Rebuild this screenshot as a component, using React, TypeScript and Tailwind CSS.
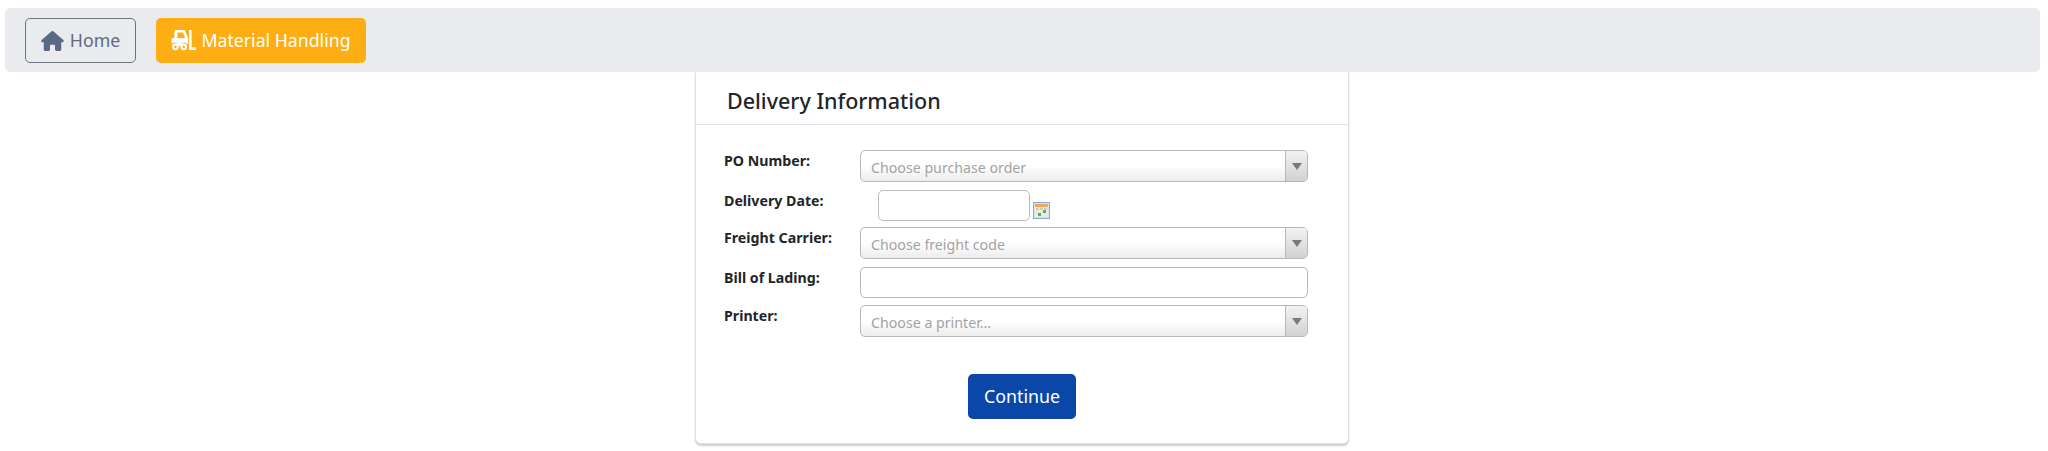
import { FaHouse } from "react-icons/fa6";

function Forklift() {
  return (
    <svg viewBox="0 0 25 21" className="w-[25px] h-[21px] shrink-0" fill="currentColor">
      <path d="M5 0h7.5c.9 0 1.6.5 1.9 1.3L17 8.2c.2.3.2.6.2.9V14.4a4.6 4.6 0 0 0-8 1.8H7.8A4.6 4.6 0 0 0 .6 13.8V9.6C.6 8.7 1.3 8 2.2 8H3.4V1.6C3.4.7 4.1 0 5 0zm1.4 2.6V8h7.8l-2.3-5.4H6.4z" fillRule="evenodd" />
      <path d="M1 16.8a3.4 3.4 0 1 1 6.8 0 3.4 3.4 0 0 1-6.8 0zm2.2 0a1.2 1.2 0 1 0 2.4 0 1.2 1.2 0 0 0-2.4 0z" fillRule="evenodd" />
      <path d="M9.4 16.8a3.4 3.4 0 1 1 6.8 0 3.4 3.4 0 0 1-6.8 0zm2.2 0a1.2 1.2 0 1 0 2.4 0 1.2 1.2 0 0 0-2.4 0z" fillRule="evenodd" />
      <path d="M18 0h2.6v17.2h4.4V20h-5.8c-.7 0-1.2-.5-1.2-1.2V0z" />
    </svg>
  );
}

function CalendarIcon() {
  return (
    <svg viewBox="0 0 17 17" className="w-[17px] h-[17px] mt-[12px] ml-[3px] shrink-0">
      <rect x="0.5" y="0.5" width="16" height="16" fill="#d5e3f4" stroke="#86acd8" />
      <rect x="2" y="2" width="13" height="3" fill="#f7a557" />
      <rect x="2" y="5" width="13" height="10" fill="#efe9dc" />
      <rect x="3" y="6" width="3" height="2" fill="#d8cdb6" />
      <rect x="7" y="6" width="3" height="2" fill="#d8cdb6" />
      <rect x="11" y="6" width="3" height="2" fill="#d8cdb6" />
      <rect x="10" y="8" width="3" height="3" fill="#5fa869" />
      <rect x="5" y="11" width="3" height="3" fill="#5fa869" />
    </svg>
  );
}

function ComboBox({ placeholder }: { placeholder: string }) {
  return (
    <div className="w-[448px] h-[32px] flex border border-[#b8b8b8] rounded-[5px] overflow-hidden bg-gradient-to-b from-white from-50% to-[#ececec]">
      <div className="flex-1 pl-[10px] text-[14.2px] leading-[33px] text-[#a3a3a3]">{placeholder}</div>
      <div className="w-[22px] border-l border-[#b8b8b8] bg-gradient-to-b from-[#f2f2f2] to-[#d2d2d2] flex items-center justify-center">
        <div className="w-0 h-0 border-x-[5px] border-x-transparent border-t-[7px] border-t-[#7a7a7a]"></div>
      </div>
    </div>
  );
}

function Label({ text }: { text: string }) {
  return <div className="w-[136px] shrink-0 pt-[1px] text-[14.2px] leading-[20px] font-bold text-[#212529]">{text}</div>;
}

export default function App() {
  return (
    <div className="bg-white h-[451px] overflow-hidden font-['Noto_Sans',sans-serif]">
      <div className="mx-[5px] mt-[8px] pt-[10px] px-[20px] h-[64px] w-[2035px] bg-[#e9ebef] rounded-[5px] flex gap-[20px] items-start">
        <div className="w-[111px] h-[45px] flex items-center justify-center gap-[6px] border border-[#6c757d] rounded-[5px] text-[#5f6b80] text-[17.7px]">
          <FaHouse className="w-[23px] h-[20px] text-[#5a6a85]" />
          <span>Home</span>
        </div>
        <div className="w-[210px] h-[45px] flex items-center justify-center gap-[5px] bg-[#fdae14] rounded-[5px] text-white text-[17.7px]">
          <Forklift />
          <span>Material Handling</span>
        </div>
      </div>
      <div className="flex justify-center pr-[4px]">
        <div className="w-[654px] h-[372px] bg-white rounded-b-[6px] border-x border-b border-[#dee2e6] shadow-[0_2px_2px_rgba(0,0,0,0.2)]">
          <div className="h-[53px] pl-[31px] pt-[13px] border-b border-[#dfe2e6] text-[21.5px] leading-[32px] font-medium text-[#212529]">
            Delivery Information
          </div>
          <div className="pl-[28px] pt-[25px]">
            <div className="flex">
              <Label text="PO Number:" />
              <ComboBox placeholder="Choose purchase order" />
            </div>
            <div className="flex mt-[8px]">
              <Label text="Delivery Date:" />
              <input className="w-[152px] h-[31px] ml-[18px] border border-[#bdbdbd] rounded-[5px]" />
              <CalendarIcon />
            </div>
            <div className="flex mt-[6px]">
              <Label text="Freight Carrier:" />
              <ComboBox placeholder="Choose freight code" />
            </div>
            <div className="flex mt-[8px]">
              <Label text="Bill of Lading:" />
              <input className="w-[448px] h-[31px] border border-[#b8b8b8] rounded-[5px]" />
            </div>
            <div className="flex mt-[7px]">
              <Label text="Printer:" />
              <ComboBox placeholder="Choose a printer..." />
            </div>
          </div>
          <div className="flex justify-center mt-[37px]">
            <button className="w-[108px] h-[45px] bg-[#0a47a9] rounded-[5px] text-white text-[17.8px]">Continue</button>
          </div>
        </div>
      </div>
    </div>
  );
}
